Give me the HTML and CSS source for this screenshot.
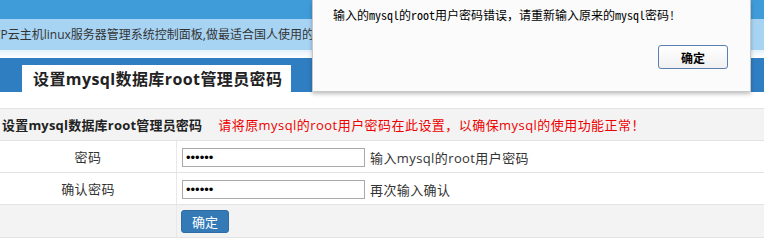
FILE: index.html
```html
<!DOCTYPE html>
<html lang="zh-CN">
<head>
    <meta charset="UTF-8">
    <meta name="viewport" content="width=device-width, initial-scale=1.0">
    <title>设置mysql数据库root管理员密码</title>
    <link rel="stylesheet" href="styles.css">
</head>
<body>
    <div class="top-bar"></div>
    <div class="notice"><span class="notice-text">CP云主机linux服务器管理系统控制面板,做最适合国人使用的云主机控制面板</span></div>
    <div class="notice-fade"></div>
    <div class="tab-bar">
        <div class="tab">设置mysql数据库root管理员密码</div>
    </div>
    <form class="panel" onsubmit="return false;">
        <table class="form-table">
            <tr class="head-row">
                <td colspan="2"><b>设置mysql数据库root管理员密码</b><span class="warn">请将原mysql的root用户密码在此设置，以确保mysql的使用功能正常！</span></td>
            </tr>
            <tr>
                <td class="label">密码</td>
                <td><input type="password" class="field" value="123456"><span class="hint">输入mysql的root用户密码</span></td>
            </tr>
            <tr>
                <td class="label">确认密码</td>
                <td><input type="password" class="field" value="123456"><span class="hint">再次输入确认</span></td>
            </tr>
            <tr class="foot-row">
                <td class="label"></td>
                <td><button class="submit-button">确定</button></td>
            </tr>
        </table>
    </form>
    <div class="alert-box">
        <div class="alert-text">输入的mysql的root用户密码错误，请重新输入原来的mysql密码!</div>
        <div class="alert-actions">
            <button class="alert-button">确定</button>
        </div>
    </div>
</body>
</html>
```

FILE: styles.css
```css
body {
    margin: 0;
    width: 764px;
    height: 251px;
    overflow: hidden;
    background-color: #fff;
    font-family: "Open Sans", "Noto Sans CJK SC", sans-serif;
    color: #333;
}
.top-bar {
    height: 19px;
    background-color: #409bd9;
}
.notice {
    height: 31px;
    line-height: 31px;
    background-color: #a8d4f4;
    font-size: 12px;
    color: #333;
    white-space: nowrap;
    overflow: hidden;
}
.notice-text {
    margin-left: -7px;
}
.notice-fade {
    height: 8px;
    background: linear-gradient(#e4f1fb, #fff);
}
.tab-bar {
    height: 34px;
    background-color: #2f7ec2;
    padding-left: 22px;
    box-sizing: border-box;
    padding-top: 7px;
}
.tab {
    width: 269px;
    height: 27px;
    line-height: 28px;
    background-color: #fff;
    font-size: 16px;
    font-weight: bold;
    letter-spacing: 0.4px;
    padding-left: 11px;
    box-sizing: border-box;
    color: #222;
}
.panel {
    margin: 16px 0 0;
}
.form-table {
    width: 100%;
    border-collapse: collapse;
    font-size: 13px;
    letter-spacing: 0.4px;
}
.form-table td {
    height: 31px;
    padding: 0;
    border-top: 1px solid #e3e3e3;
    border-bottom: 1px solid #e3e3e3;
}
.head-row td {
    background-color: #f3f3f3;
    padding-left: 2px;
    line-height: 26px;
}
.head-row b {
    color: #222;
    letter-spacing: 0.2px;
}
.warn {
    color: #e00;
    margin-left: 16px;
    letter-spacing: 0.45px;
}
.label {
    width: 176px;
    text-align: center;
    border-right: 1px solid #e8e8e8;
}
.field {
    width: 183px;
    height: 19px;
    box-sizing: border-box;
    margin: 0 0 0 5px;
    border: 1px solid #a9a9a9;
    padding: 0 3px;
    font-size: 13px;
    vertical-align: middle;
}
.hint {
    margin-left: 5px;
    vertical-align: middle;
}
.foot-row td {
    background-color: #f3f3f3;
    height: 32px;
}
.submit-button {
    margin-left: 4px;
    width: 48px;
    height: 23px;
    border: 1px solid #2e6da4;
    border-radius: 3px;
    background-color: #337ab7;
    color: #fff;
    font-family: "Open Sans", "Noto Sans CJK SC", sans-serif;
    font-size: 13px;
    padding: 0;
    vertical-align: middle;
}
.alert-box {
    position: absolute;
    left: 312px;
    top: 0;
    width: 439px;
    height: 92px;
    box-sizing: border-box;
    background-color: #fbfbfb;
    border: 1px solid #c8c8c8;
    border-top: none;
    box-shadow: 0 2px 4px rgba(0, 0, 0, 0.25);
    padding: 7px 20px 0 20px;
}
.alert-text {
    font-family: "Noto Sans Mono CJK SC", "Noto Sans CJK SC", monospace;
    font-size: 12px;
    color: #000;
    line-height: 16px;
}
.alert-actions {
    display: flex;
    justify-content: flex-end;
    margin-top: 22px;
    padding-right: 2px;
}
.alert-button {
    width: 70px;
    height: 24px;
    border: 1px solid #5a7fb0;
    border-radius: 3px;
    background: linear-gradient(#ffffff, #f0f0f0);
    font-family: "Noto Sans CJK SC", sans-serif;
    font-size: 12px;
    font-weight: bold;
    color: #000;
    padding: 0;
}
```
